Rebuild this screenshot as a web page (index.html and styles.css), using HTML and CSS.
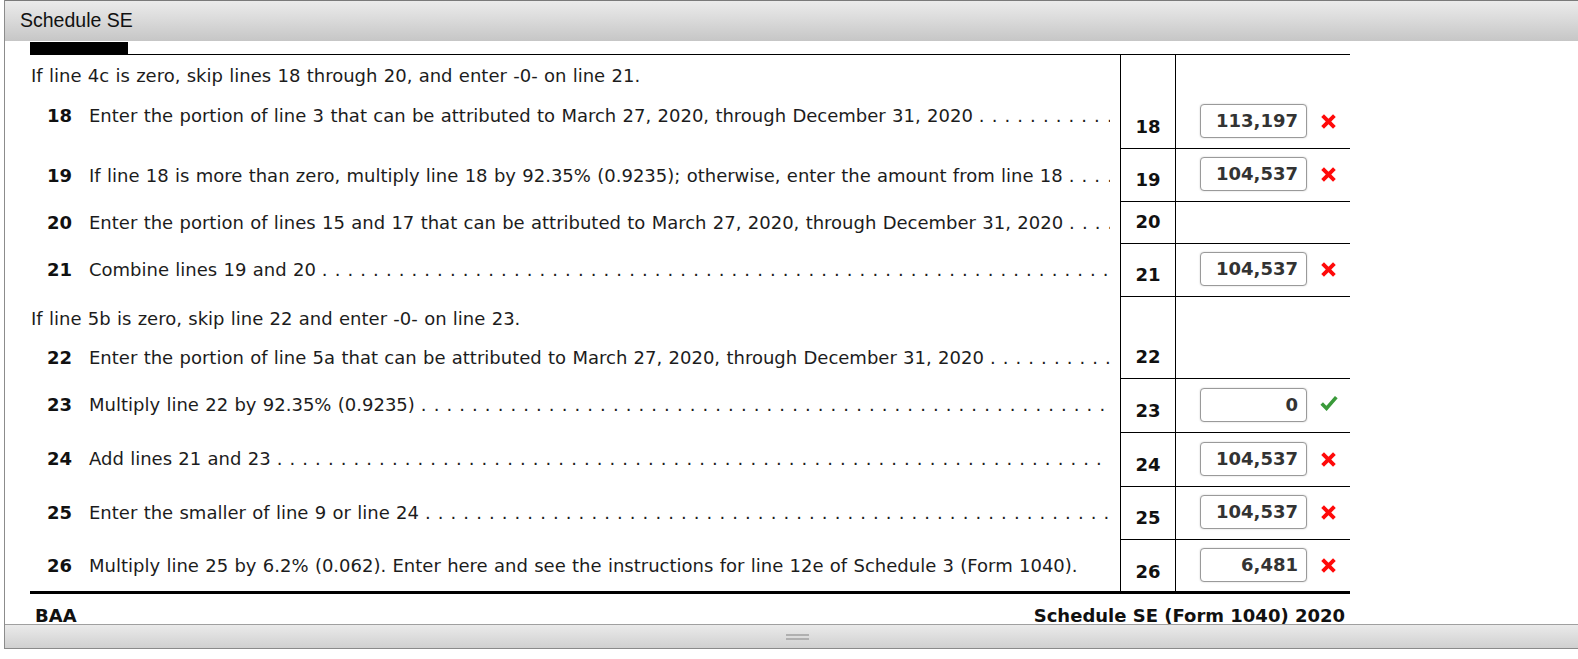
FILE: index.html
```html
<!DOCTYPE html>
<html>
<head>
<meta charset="utf-8">
<title>Schedule SE</title>
<link rel="stylesheet" href="styles.css">
</head>
<body>
<div class="window">
  <div class="titlebar"><span class="title">Schedule SE</span></div>
  <div class="viewport">
    <div class="sheet">
      <div class="clipped"><div class="partbox"></div></div>

      <div class="row r18">
        <div class="desc">
          <div class="note">If line 4c is zero, skip lines 18 through 20, and enter -0- on line 21.</div>
          <div class="line"><span class="ln">18</span><span class="txt">Enter the portion of line 3 that can be attributed to March 27, 2020, through December 31, 2020</span><span class="dots">. . . . . . . . . . . . . . . . . . . . . . . . . . . . . . . . . . . . . . . . . . . . . . . . . . . . . . . . . . . . . . . . . . . . . . . . . . . . . . . . . . . . . . . . . . . . . . . . . . . . .</span></div>
        </div>
        <div class="num"><span>18</span></div>
        <div class="val"><span class="box">113,197</span><svg class="mark" viewBox="0 0 14 14"><path d="M1.5 1.5 L12.5 12.5 M12.5 1.5 L1.5 12.5"/></svg></div>
      </div>

      <div class="row r19">
        <div class="desc">
          <div class="line"><span class="ln">19</span><span class="txt">If line 18 is more than zero, multiply line 18 by 92.35% (0.9235); otherwise, enter the amount from line 18</span><span class="dots">. . . . . . . . . . . . . . . . . . . . . . . . . . . . . . . . . . . . . . . . . . . . . . . . . . . . . . . . . . . . . . . . . . . . . . . . . . . . . . . . . . . . . . . . . . . . . . . . . . . . .</span></div>
        </div>
        <div class="num"><span>19</span></div>
        <div class="val"><span class="box">104,537</span><svg class="mark" viewBox="0 0 14 14"><path d="M1.5 1.5 L12.5 12.5 M12.5 1.5 L1.5 12.5"/></svg></div>
      </div>

      <div class="row r20">
        <div class="desc">
          <div class="line"><span class="ln">20</span><span class="txt">Enter the portion of lines 15 and 17 that can be attributed to March 27, 2020, through December 31, 2020</span><span class="dots">. . . . . . . . . . . . . . . . . . . . . . . . . . . . . . . . . . . . . . . . . . . . . . . . . . . . . . . . . . . . . . . . . . . . . . . . . . . . . . . . . . . . . . . . . . . . . . . . . . . . .</span></div>
        </div>
        <div class="num"><span>20</span></div>
        <div class="val"></div>
      </div>

      <div class="row r21">
        <div class="desc">
          <div class="line"><span class="ln">21</span><span class="txt">Combine lines 19 and 20</span><span class="dots">. . . . . . . . . . . . . . . . . . . . . . . . . . . . . . . . . . . . . . . . . . . . . . . . . . . . . . . . . . . . . . . . . . . . . . . . . . . . . . . . . . . . . . . . . . . . . . . . . . . . .</span></div>
        </div>
        <div class="num"><span>21</span></div>
        <div class="val"><span class="box">104,537</span><svg class="mark" viewBox="0 0 14 14"><path d="M1.5 1.5 L12.5 12.5 M12.5 1.5 L1.5 12.5"/></svg></div>
      </div>

      <div class="row r22">
        <div class="desc">
          <div class="note">If line 5b is zero, skip line 22 and enter -0- on line 23.</div>
          <div class="line"><span class="ln">22</span><span class="txt">Enter the portion of line 5a that can be attributed to March 27, 2020, through December 31, 2020</span><span class="dots">. . . . . . . . . . . . . . . . . . . . . . . . . . . . . . . . . . . . . . . . . . . . . . . . . . . . . . . . . . . . . . . . . . . . . . . . . . . . . . . . . . . . . . . . . . . . . . . . . . . . .</span></div>
        </div>
        <div class="num"><span>22</span></div>
        <div class="val"></div>
      </div>

      <div class="row r23">
        <div class="desc">
          <div class="line"><span class="ln">23</span><span class="txt">Multiply line 22 by 92.35% (0.9235)</span><span class="dots">. . . . . . . . . . . . . . . . . . . . . . . . . . . . . . . . . . . . . . . . . . . . . . . . . . . . . . . . . . . . . . . . . . . . . . . . . . . . . . . . . . . . . . . . . . . . . . . . . . . . .</span></div>
        </div>
        <div class="num"><span>23</span></div>
        <div class="val"><span class="box">0</span><svg class="mark ok" viewBox="0 0 16 14"><path d="M1.5 7.5 L5.8 11.8 L14.5 1.8"/></svg></div>
      </div>

      <div class="row r24">
        <div class="desc">
          <div class="line"><span class="ln">24</span><span class="txt">Add lines 21 and 23</span><span class="dots">. . . . . . . . . . . . . . . . . . . . . . . . . . . . . . . . . . . . . . . . . . . . . . . . . . . . . . . . . . . . . . . . . . . . . . . . . . . . . . . . . . . . . . . . . . . . . . . . . . . . .</span></div>
        </div>
        <div class="num"><span>24</span></div>
        <div class="val"><span class="box">104,537</span><svg class="mark" viewBox="0 0 14 14"><path d="M1.5 1.5 L12.5 12.5 M12.5 1.5 L1.5 12.5"/></svg></div>
      </div>

      <div class="row r25">
        <div class="desc">
          <div class="line"><span class="ln">25</span><span class="txt">Enter the smaller of line 9 or line 24</span><span class="dots">. . . . . . . . . . . . . . . . . . . . . . . . . . . . . . . . . . . . . . . . . . . . . . . . . . . . . . . . . . . . . . . . . . . . . . . . . . . . . . . . . . . . . . . . . . . . . . . . . . . . .</span></div>
        </div>
        <div class="num"><span>25</span></div>
        <div class="val"><span class="box">104,537</span><svg class="mark" viewBox="0 0 14 14"><path d="M1.5 1.5 L12.5 12.5 M12.5 1.5 L1.5 12.5"/></svg></div>
      </div>

      <div class="row r26">
        <div class="desc">
          <div class="line"><span class="ln">26</span><span class="txt">Multiply line 25 by 6.2% (0.062). Enter here and see the instructions for line 12e of Schedule 3 (Form 1040).</span></div>
        </div>
        <div class="num"><span>26</span></div>
        <div class="val"><span class="box">6,481</span><svg class="mark" viewBox="0 0 14 14"><path d="M1.5 1.5 L12.5 12.5 M12.5 1.5 L1.5 12.5"/></svg></div>
      </div>

      <div class="sheetfoot">
        <span class="baa">BAA</span>
        <span class="formname">Schedule SE (Form 1040) 2020</span>
      </div>
    </div>
  </div>
  <div class="bottombar"><span class="grip"></span></div>
</div>
</body>
</html>
```
FILE: styles.css
```css
html, body {
  margin: 0;
  padding: 0;
  background: #ffffff;
  overflow: hidden;
}

.window {
  margin-left: 4px;
  width: 1585px;
  border-left: 1px solid #8c8c8c;
  display: flex;
  flex-direction: column;
}

.titlebar {
  height: 40px;
  border-top: 1px solid #7a7a7a;
  background: linear-gradient(to bottom, #ebebeb 0%, #d9d9d9 50%, #c6c6c6 100%);
  display: flex;
  align-items: center;
  padding-left: 15px;
}

.title {
  font-family: "Liberation Sans", Arial, sans-serif;
  font-size: 19.5px;
  color: #111111;
  padding-bottom: 2px;
}

.viewport {
  height: 583px;
  overflow: hidden;
  background: #ffffff;
}

.sheet {
  margin-left: 25px;
  width: 1320px;
  font-family: "DejaVu Sans", Verdana, sans-serif;
  font-size: 18px;
  color: #1c1c1c;
}

.clipped {
  height: 13px;
  border-bottom: 1px solid #000000;
  display: flex;
  align-items: flex-end;
}

.partbox {
  width: 98px;
  height: 12px;
  background: #000000;
}

.row {
  display: grid;
  grid-template-columns: 1090px 56px 174px;
}

.r18 { height: 94px; }
.r19 { height: 53px; }
.r20 { height: 42px; }
.r21 { height: 53px; }
.r22 { height: 82px; }
.r23 { height: 54px; }
.r24 { height: 54px; }
.r25 { height: 53px; }
.r26 { height: 51px; }

.desc {
  display: flex;
  flex-direction: column;
  justify-content: flex-end;
  padding-bottom: 15px;
  line-height: 22px;
}

.r18 .desc { padding-top: 10px; padding-bottom: 22px; }
.r19 .desc { padding-bottom: 15px; }
.r20 .desc { padding-bottom: 10px; }
.r21 .desc { padding-bottom: 16px; }
.r22 .desc { padding-top: 11px; padding-bottom: 10px; }
.r23 .desc { padding-bottom: 17px; }
.r24 .desc { padding-bottom: 17px; }
.r25 .desc { padding-bottom: 16px; }
.r26 .desc { padding-bottom: 14px; }

.note {
  margin-bottom: auto;
  padding-left: 1px;
  word-spacing: 0.6px;
  white-space: nowrap;
}

.line {
  display: flex;
  white-space: nowrap;
  padding-right: 10px;
}

.ln {
  flex: none;
  width: 42px;
  padding-left: 17px;
  font-weight: bold;
  color: #111111;
}

.txt {
  flex: none;
  word-spacing: 0.6px;
}

.dots {
  flex: 1 1 auto;
  min-width: 0;
  overflow: hidden;
  letter-spacing: 0.68px;
  padding-left: 6px;
}

.num {
  box-sizing: border-box;
  border-left: 1px solid #000000;
  border-right: 1px solid #000000;
  border-bottom: 1px solid #000000;
  display: flex;
  align-items: flex-end;
  justify-content: center;
  padding-bottom: 10px;
  line-height: 22px;
  font-weight: bold;
  color: #111111;
}

.val {
  box-sizing: border-box;
  border-bottom: 1px solid #000000;
  display: flex;
  align-items: flex-end;
  padding-left: 24px;
  padding-bottom: 10px;
}

.r26 .num { border-bottom: none; padding-bottom: 8px; }
.r26 .val { border-bottom: none; padding-bottom: 9px; }

.box {
  box-sizing: border-box;
  width: 107px;
  height: 34px;
  border: 1px solid #9a9a9a;
  border-radius: 4px;
  box-shadow: 0 0 2px rgba(0, 0, 0, 0.2);
  font-weight: bold;
  color: #333333;
  text-align: right;
  padding-right: 8px;
  line-height: 32px;
  background: #ffffff;
}

.mark {
  width: 15px;
  height: 15px;
  margin-left: 14px;
  margin-bottom: 9px;
  fill: none;
  stroke: #ff0a0a;
  stroke-width: 3.6;
}

.mark.ok {
  width: 18px;
  height: 16px;
  margin-left: 13px;
  margin-bottom: 11px;
  stroke: #3a9a3a;
  stroke-width: 3.2;
}

.sheetfoot {
  border-top: 3px solid #000000;
  display: flex;
  justify-content: space-between;
  padding: 11px 5px 0 5px;
  line-height: 22px;
  font-weight: bold;
  color: #111111;
}

.bottombar {
  box-sizing: border-box;
  height: 25px;
  border-top: 1px solid #a0a0a0;
  border-bottom: 1px solid #8a8a8a;
  background: linear-gradient(to bottom, #eaeaea 0%, #d0d0d0 100%);
  display: flex;
  align-items: center;
  justify-content: center;
}

.grip {
  width: 23px;
  height: 6px;
  border-top: 2px solid #b0b0b0;
  border-bottom: 2px solid #b0b0b0;
  box-sizing: border-box;
}
```
